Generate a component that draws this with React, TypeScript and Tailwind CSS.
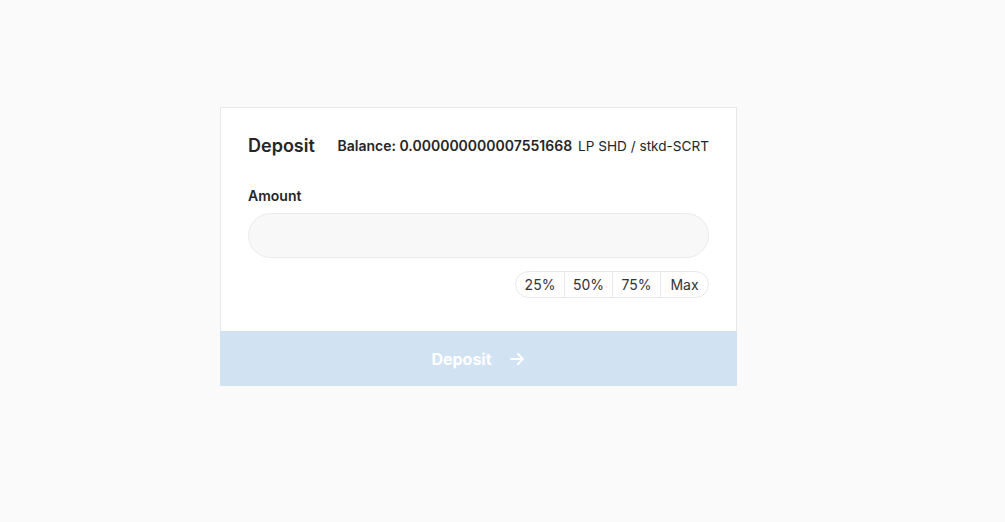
import React, { useState } from 'react';

const PERCENTS = ['25%', '50%', '75%', 'Max'];

const ArrowRight = () => (
  <svg width="18" height="18" viewBox="0 0 24 24" fill="none" stroke="currentColor" strokeWidth="2.4" strokeLinecap="round" strokeLinejoin="round">
    <path d="M4 12h15" />
    <path d="M13 5l7 7-7 7" />
  </svg>
);

const App: React.FC = () => {
  const [amount, setAmount] = useState('');

  return (
    <div className="min-h-screen w-full bg-[#fafafa] pt-[107px] font-['Inter',sans-serif] text-[#262626]">
      <div className="ml-[220px] w-[517px]">
        <div className="border-x border-t border-[#e8e8e8] bg-white px-[27px] pt-6 pb-[33px]">
          <div className="flex items-center justify-between">
            <h2 className="text-[18px] leading-7 font-semibold">Deposit</h2>
            <div className="flex items-baseline leading-5">
              <span className="text-[14px] font-semibold">Balance: 0.000000000007551668</span>
              <span className="ml-1.5 text-[13.6px]">LP SHD / stkd-SCRT</span>
            </div>
          </div>

          <label className="mt-[26px] mb-[7px] block text-[14px] leading-5 font-semibold">Amount</label>
          <input
            value={amount}
            onChange={(e) => setAmount(e.target.value)}
            className="h-[45px] w-full rounded-full border border-[#ebebeb] bg-[#f8f8f8] px-5 text-[15px] outline-none"
          />

          <div className="mt-[13px] flex justify-end">
            <div className="flex h-[27px] overflow-hidden rounded-full border border-[#e8e8e8] text-[14px]">
              {PERCENTS.map((p, i) => (
                <button
                  key={p}
                  className={`w-[48px] text-center text-[#333] ${i > 0 ? 'border-l border-[#e8e8e8]' : ''}`}
                >
                  {p}
                </button>
              ))}
            </div>
          </div>
        </div>

        <button className="flex h-[55px] w-full items-center justify-center gap-4 bg-[#d1e2f3] text-[16px] font-bold text-white">
          <span>Deposit</span>
          <ArrowRight />
        </button>
      </div>
    </div>
  );
};

export default App;
